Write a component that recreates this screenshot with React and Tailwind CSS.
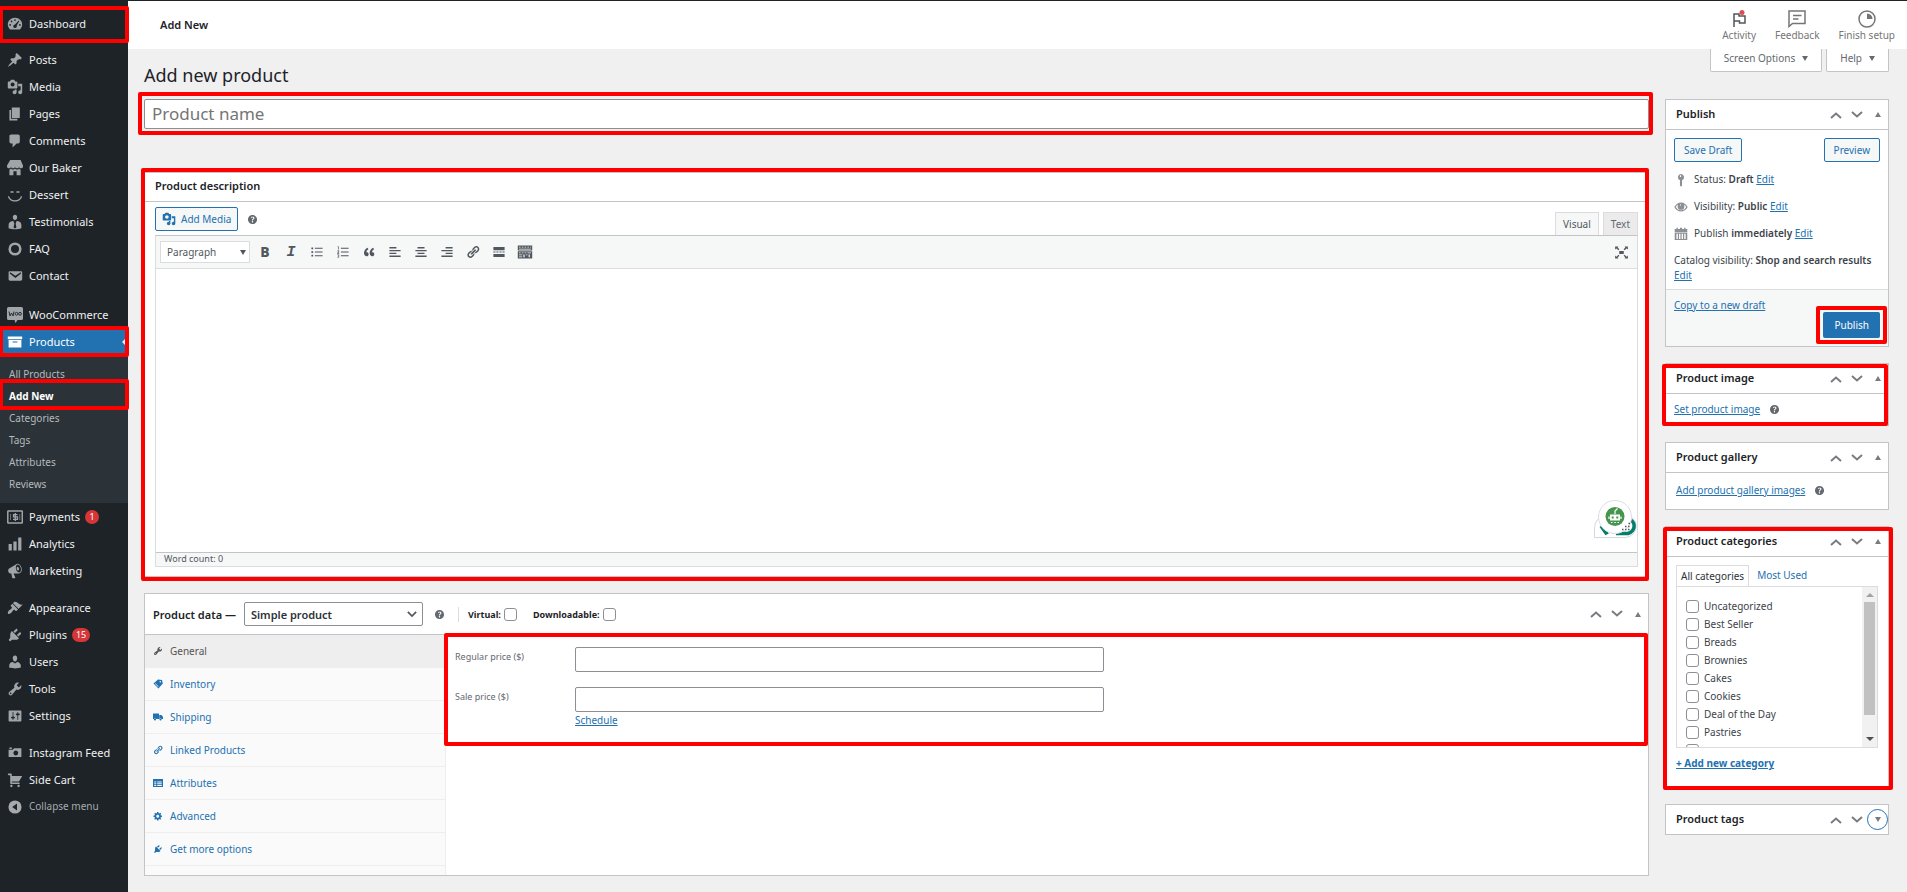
import React, { useState } from "react";

const icons = {
  dashboard:
    "M3.76 17h12.48A8.96 8.96 0 0 0 19 10.8C19 6 15 2.300 10 2.300S1 6 1 10.800A8.960 8.960 0 0 0 3.760 17zM10 4a1.100 1.100 0 1 1 0 2.200A1.100 1.100 0 0 1 10 4zM5.700 5.700a1.100 1.100 0 1 1 0 2.200 1.100 1.100 0 0 1 0-2.200zM14.700 5.700l.7.7-3.200 5.500c.5 1.700-.4 3.100-2.200 3.100-1.700 0-2.700-1.700-1.900-3.200.4-.7 1.100-1.100 1.900-1.100zM3.900 10a1.100 1.100 0 1 1 0 2.200 1.100 1.100 0 0 1 0-2.200zM16.100 10a1.100 1.100 0 1 1 0 2.200 1.100 1.100 0 0 1 0-2.200z",
  pin: "M10.44 3.02l1.82-1.82 6.36 6.35-1.83 1.82c-1.05-.68-2.48-.57-3.41.36l-.75.75c-.92.93-1.04 2.35-.35 3.41l-1.83 1.82-2.41-2.41-2.8 2.79c-.42.42-3.38 2.71-3.8 2.29s1.86-3.39 2.28-3.81l2.79-2.79L4.1 9.36l1.83-1.82c1.05.69 2.48.57 3.4-.36l.75-.75c.93-.92 1.05-2.35.36-3.41z",
  media:
    "M13 11V4c0-.55-.45-1-1-1h-1.67L9 1H5L3.67 3H2c-.55 0-1 .45-1 1v7c0 .55.45 1 1 1h10c.55 0 1-.45 1-1zM7 4.5c1.38 0 2.5 1.12 2.5 2.5S8.38 9.5 7 9.5 4.5 8.38 4.5 7 5.62 4.5 7 4.5zM14 6h5v10.5c0 1.38-1.12 2.5-2.5 2.5S14 17.88 14 16.5s1.12-2.5 2.5-2.5c.17 0 .34.02.5.05V9h-3V6zm-4 8.050V13h2v3.5c0 1.38-1.12 2.5-2.5 2.5S7 17.88 7 16.5 8.120 14 9.5 14c.17 0 .34.02.5.05z",
  page: "M6 15V2h10v13H6zm-1 1h8v2H3V5h2v11z",
  comment: "M5 2h9c1.1 0 2 .9 2 2v7c0 1.1-.9 2-2 2h-2l-5 5v-5H5c-1.1 0-2-.9-2-2V4c0-1.1.9-2 2-2z",
  store:
    "M1 10c.41.29.96.43 1.5.43.55 0 1.09-.14 1.5-.43.62-.46 1-1.17 1-2 0 .83.37 1.54 1 2 .41.29.96.43 1.5.43.55 0 1.09-.14 1.5-.43.62-.46 1-1.17 1-2 0 .83.37 1.54 1 2 .41.29.96.43 1.51.43.54 0 1.08-.14 1.49-.43.62-.46 1-1.17 1-2 0 .83.37 1.54 1 2 .41.29.96.43 1.5.43.55 0 1.09-.14 1.5-.43.63-.46 1-1.17 1-2V7l-3-7H4L0 7v1c0 .83.37 1.54 1 2zm2 8.99h5v-5h4v5h5v-7c-.37-.05-.72-.22-1-.43-.63-.45-1-.73-1-1.56 0 .83-.38 1.11-1 1.56-.41.3-.95.43-1.49.44-.55 0-1.1-.14-1.51-.44-.63-.45-1-.73-1-1.56 0 .83-.38 1.11-1 1.56-.41.3-.95.43-1.5.44-.54 0-1.09-.14-1.5-.44-.63-.45-1-.73-1-1.57 0 .84-.38 1.12-1 1.57-.29.21-.63.38-1 .44v6.99z",
  smiley:
    "M5 5.200h2.600c.6 0 .9.500.9 1s-.3 1-.9 1H5c-.6 0-.9-.5-.9-1s.3-1 .9-1zM12.400 5.200H15c.6 0 .9.500.9 1s-.3 1-.9 1h-2.600c-.6 0-.9-.5-.9-1s.3-1 .9-1zM1 11.500h1.600c1 3 3.900 5 7.400 5s6.400-2 7.400-5H19c-1 4-4.600 6.700-9 6.700s-8-2.700-9-6.700z",
  person:
    "M10 7.500C8 7.500 7.300 5.300 7.300 4c0-1.600 1-3 2.700-3s2.700 1.400 2.700 3c0 1.300-.7 3.500-2.700 3.500zM7 8.700l2 1-.6 1 .8 1.200-1 5 1.800 1.100 1.800-1.100-1-5 .8-1.200-.6-1 2-1c3 .3 5 2.300 5 5v4c-4.500 1.800-11.500 1.800-16 0v-4c0-2.700 2-4.700 5-5z",
  ring: "M10 1.800a8.200 8.200 0 1 1 0 16.400 8.200 8.200 0 0 1 0-16.400zm0 3.200a5 5 0 1 0 0 10 5 5 0 0 0 0-10z",
  email:
    "M3.87 4h13.25C18.37 4 19 4.590 19 5.790v8.420c0 1.190-.63 1.790-1.880 1.790H3.870c-1.250 0-1.880-.6-1.880-1.790V5.790c0-1.2.63-1.790 1.880-1.790zm6.620 8.600l6.740-5.530c.24-.2.43-.66.13-1.070-.29-.41-.82-.42-1.170-.17l-5.700 3.860L4.800 5.830c-.35-.25-.88-.24-1.170.17-.3.41-.11.87.13 1.070z",
  archive: "M19 3v3.500H1V3h18zM2 7.500h16V17H2V7.500zM13 10.500V9.300H7v1.200h6z",
  chart: "M18 18V2h-4v16h4zm-6 0V7H8v11h4zm-6 0v-8H2v8h4z",
  megaphone:
    "M18.15 5.94c.46 1.62.38 3.22-.02 4.48-.42 1.28-1.26 2.18-2.3 2.48-.16.06-.26.06-.4.06-.06.02-.12.02-.18.02-.06.02-.14.02-.22.02h-6.8l2.22 5.5c.02.14-.06.26-.14.34-.08.1-.24.16-.34.16H6.95c-.1 0-.26-.06-.34-.16-.08-.08-.16-.2-.14-.34l-1-5.5H4.25l-.02-.02c-.5.06-1.08-.18-1.54-.62s-.88-1.08-1.06-1.88c-.24-.8-.2-1.56-.02-2.2.18-.62.58-1.08 1.06-1.3l.02-.02 9-5.4c.1-.06.18-.1.24-.16.06-.04.14-.08.24-.12.16-.08.28-.12.5-.18 1.04-.3 2.24.1 3.22.98s1.84 2.24 2.26 3.86zm-2.58 5.98h-.02c.4-.1.74-.34 1.04-.7.58-.7.86-1.76.86-3.04 0-.64-.1-1.3-.28-1.98-.34-1.36-1.02-2.5-1.78-3.24s-1.68-1.1-2.46-.88c-.82.22-1.4.96-1.7 2-.32 1.04-.28 2.36.06 3.72.38 1.36 1 2.5 1.8 3.24.78.74 1.62 1.1 2.48.88zm-2.54-7.08c.22-.04.42-.02.62.04.38.16.76.48 1.02 1s.42 1.2.42 1.78c0 .3-.04.56-.12.8-.18.48-.44.84-.86.94-.34.1-.8-.06-1.14-.4s-.64-.86-.78-1.5c-.18-.62-.12-1.24.02-1.72s.48-.84.82-.94z",
  brush:
    "M14.48 11.06L7.41 3.99l1.5-1.5c.5-.56 2.3-.47 3.51.32 1.21.8 1.43 1.28 2.91 2.1 1.18.64 2.45 1.26 4.45.85zm-.71.71L6.7 4.7 4.93 6.47c-.39.39-.39 1.02 0 1.41l1.06 1.06c.39.39.39 1.03 0 1.42-.6.6-1.43 1.11-2.21 1.69-.35.26-.7.53-1.01.84C1.43 14.23.4 16.08 1.4 17.07c.99 1 2.84-.03 4.18-1.36.31-.31.58-.66.85-1.02.57-.78 1.08-1.61 1.69-2.21.39-.39 1.02-.39 1.41 0l1.06 1.06c.39.39 1.02.39 1.41 0z",
  plug: "M13.11 4.36L9.87 7.6 8 5.73l3.24-3.24c.35-.34 1.05-.2 1.56.32.52.51.66 1.21.31 1.55zm-8 1.77l.91-1.12 9.01 9.01-1.19.84c-.71.71-2.63 1.16-3.82 1.16H6.14L4.9 17.26c-.59.59-1.54.59-2.12 0-.59-.58-.59-1.53 0-2.12l1.24-1.24v-3.88c0-1.13.4-3.19 1.09-3.89zm7.26 3.97l3.24-3.24c.34-.35 1.04-.21 1.55.31.52.51.66 1.21.31 1.55l-3.24 3.25z",
  user: "M10 9.25c-2.27 0-2.73-3.44-2.73-3.44C7 4.02 7.82 2 9.97 2c2.16 0 2.98 2.02 2.71 3.81 0 0-.41 3.44-2.68 3.44zm0 2.57L12.72 10c2.39 0 4.52 2.33 4.52 4.53v2.49s-3.65 1.13-7.24 1.13c-3.65 0-7.24-1.13-7.24-1.13v-2.49c0-2.25 1.94-4.48 4.47-4.48z",
  wrench:
    "M16.68 9.77c-1.34 1.34-3.3 1.67-4.95.99l-5.41 6.52c-.99.99-2.59.99-3.58 0s-.99-2.59 0-3.57l6.52-5.42c-.68-1.65-.35-3.61.99-4.95 1.28-1.28 3.12-1.62 4.72-1.06l-2.89 2.89 2.82 2.82 2.86-2.87c.53 1.58.18 3.39-1.08 4.65zM3.81 16.21c.4.39 1.04.39 1.43 0 .4-.4.4-1.04 0-1.43-.39-.4-1.03-.4-1.43 0-.39.39-.39 1.03 0 1.43z",
  sliders:
    "M18 16V4c0-.55-.45-1-1-1H3c-.55 0-1 .45-1 1v12c0 .55.45 1 1 1h14c.55 0 1-.45 1-1zM8 11h1c.55 0 1 .45 1 1s-.45 1-1 1H8v1.5c0 .28-.22.5-.5.5s-.5-.22-.5-.5V13H6c-.55 0-1-.45-1-1s.45-1 1-1h1V5.5c0-.28.22-.5.5-.5s.5.22.5.5V11zm5-2h-1c-.55 0-1-.45-1-1s.45-1 1-1h1V5.5c0-.28.22-.5.5-.5s.5.22.5.5V7h1c.55 0 1 .45 1 1s-.45 1-1 1h-1v5.5c0 .28-.22.5-.5.5s-.5-.22-.5-.5V9z",
  camera: "M6 5V3H3v2h3zm12 10V4H9L7 6H2v9h16zm-7-8c1.66 0 3 1.34 3 3s-1.34 3-3 3-3-1.34-3-3 1.34-3 3-3z",
  cart: "M6 13h9c.55 0 1 .45 1 1s-.45 1-1 1H5c-.55 0-1-.45-1-1V4H2c-.55 0-1-.45-1-1s.45-1 1-1h3c.55 0 1 .45 1 1v2h13l-4 7H6v1zm-.5 3c.83 0 1.5.67 1.5 1.5S6.33 19 5.5 19 4 18.33 4 17.5 4.67 16 5.5 16zm9 0c.83 0 1.5.67 1.5 1.5s-.67 1.5-1.5 1.5-1.5-.67-1.5-1.5.67-1.5 1.5-1.5z",
  collapse: "M10 1.800a8.200 8.200 0 1 1 0 16.400 8.200 8.200 0 0 1 0-16.400zm2.500 3.700L6.500 10l6 4.500z",
  quote:
    "M9.49 13.22c0-.74-.2-1.38-.61-1.9-.62-.78-1.83-.88-2.53-.72-.29-1.65 1.11-3.75 2.92-4.65L7.88 4c-2.73 1.3-5.42 4.28-4.96 8.05C3.21 14.43 4.59 16 6.54 16c.85 0 1.56-.25 2.12-.75s.83-1.18.83-2.03zm8.05 0c0-.74-.2-1.38-.61-1.9-.63-.78-1.83-.88-2.53-.72-.29-1.65 1.11-3.75 2.92-4.65L15.93 4c-2.73 1.3-5.41 4.28-4.95 8.05.29 2.38 1.66 3.95 3.61 3.95.85 0 1.56-.25 2.12-.75s.83-1.18.83-2.03z",
  link: "M17.74 2.76c1.68 1.69 1.68 4.41 0 6.1l-1.53 1.52c-1.12 1.12-2.7 1.47-4.14 1.09l2.62-2.61.76-.77.76-.76c.84-.84.84-2.2 0-3.04-.84-.85-2.2-.85-3.04 0l-.77.76-3.38 3.38c-.37-1.44-.02-3.02 1.1-4.14l1.52-1.53c1.69-1.68 4.42-1.68 6.1 0zM8.59 13.43l5.34-5.34c.42-.42.42-1.1 0-1.52-.44-.43-1.13-.39-1.53 0l-5.33 5.34c-.42.42-.42 1.1 0 1.52.44.43 1.13.39 1.52 0zm-.76 2.29l4.14-4.15c.38 1.44.03 3.02-1.09 4.14l-1.52 1.53c-1.69 1.68-4.41 1.68-6.1 0-1.68-1.68-1.68-4.42 0-6.1l1.53-1.52c1.12-1.12 2.7-1.47 4.14-1.1l-4.14 4.15c-.85.84-.85 2.2 0 3.05.84.84 2.2.84 3.04 0z",
  listUl: "M2 3.500h2.500v2.500H2zM7 4h11v1.300H7zM2 8.800h2.500v2.500H2zM7 9.300h11v1.300H7zM2 14h2.500v2.500H2zM7 14.600h11v1.300H7z",
  listOl: "M2 2h2v4.500H3V3H2zM7 4h11v1.300H7zM1.800 8H4.500v2.500L3 11.500h1.500v1H1.800v-1.500L3.500 9.800V9H1.800zM7 9.300h11v1.300H7zM1.800 13.500h2.700V18H1.800v-1h1.700v-.8H2.200v-1h1.300v-.8H1.800zM7 14.600h11v1.300H7z",
  alignLeft: "M2 3h10v2H2zM2 7h16v2H2zM2 11h10v2H2zM2 15h16v2H2z",
  alignCenter: "M5 3h10v2H5zM2 7h16v2H2zM5 11h10v2H5zM2 15h16v2H2z",
  alignRight: "M8 3h10v2H8zM2 7h16v2H2zM8 11h10v2H8zM2 15h16v2H2z",
  more: "M2 3h16v4.500H2zM2 9.300h3v1.500H2zM6.300 9.300h3v1.500h-3zM10.700 9.300h3v1.500h-3zM15 9.300h3v1.500h-3zM2 12.700h16v4.500H2z",
  kitchen:
    "M1 2h18v6H1zM2.500 3.500v1h2v-1zM6 3.500v1h2v-1zM9.500 3.500v1h2v-1zM13 3.500v1h2v-1zM16.500 3.500v1h1v-1zM2.500 6v1h15V6zM1 9h18v9H1zM2.500 10.500v1h2v-1zM6 10.500v1h2v-1zM9.500 10.500v1h2v-1zM13 10.500v1h4.500v-1zM2.500 13v1h4v-1zM8 13v3.500h1.500V13zM11 13v1h2v-1zM14.500 13v3.500H16V13zM2.500 15.500v1h4v-1z",
  expand:
    "M7 8h6v4H7zM1.500 2h4.500L4.800 3.300 7.200 5.700 5.900 7 3.300 4.500 1.500 6zM18.500 2H14l1.200 1.300-2.400 2.400L14.100 7l2.600-2.500L18.500 6zM1.500 18h4.500l-1.200-1.300 2.400-2.400L5.900 13l-2.600 2.500L1.500 14zM18.500 18H14l1.200-1.300-2.400-2.400 1.300-1.300 2.600 2.500 1.800-1.500z",
  help: "M17 10c0-3.870-3.140-7-7-7-3.870 0-7 3.130-7 7s3.130 7 7 7c3.860 0 7-3.130 7-7zm-6.300 1.480H9.140v-.43c0-.38.08-.7.24-.98s.46-.57.88-.89c.41-.29.68-.53.81-.71.14-.18.2-.39.2-.62 0-.25-.09-.44-.28-.58-.19-.13-.45-.19-.79-.19-.58 0-1.250.19-2 .57l-.64-1.280c.87-.49 1.800-.74 2.770-.74.81 0 1.450.2 1.920.58.48.39.71.91.71 1.550 0 .43-.09.8-.29 1.110-.19.32-.57.67-1.110 1.060-.38.28-.61.49-.71.63-.1.15-.15.34-.15.570v.35zm-1.470 2.740c-.18-.17-.27-.42-.27-.73 0-.33.08-.58.26-.75s.43-.25.77-.25c.32 0 .57.09.75.26s.27.42.27.74c0 .3-.09.55-.27.72-.18.180-.43.270-.75.270-.33 0-.58-.09-.76-.26z",
  key: "M10 1.500a4.500 4.500 0 0 1 1.500 8.700V18L10 19.500 8.500 18v-7.800A4.500 4.500 0 0 1 10 1.500zM8.500 3.300v2.500h1.600V3.300z",
  eye: "M10 3.500c4 0 7.500 2.500 9.500 6.500-2 4-5.500 6.500-9.500 6.500S2.500 14 .5 10C2.500 6 6 3.500 10 3.500zM2.500 10c1.500 2.800 4.300 4.700 7.500 4.700s6-1.900 7.500-4.700c-.8-1.500-2-2.700-3.400-3.500.5.900.7 1.800.7 2.800a4.800 4.800 0 0 1-9.600 0c0-1 .2-1.900.7-2.800C4.500 7.300 3.300 8.500 2.500 10zM10 6.200a1.600 1.600 0 0 0-1.600 1.600h1.600z",
  calendar:
    "M1 3h2.500V1h2v2h3V1h3v2h3V1h2v2H19v4H1zM1 8h18v10.500H1zM3.500 9.500v7.500h2V9.500zM7.200 9.500v7.500h2V9.500zM10.900 9.500v7.500h2V9.500zM14.600 9.500v7.500h2V9.500z",
  tags: "M10 1l8 1 1.500 7-8.500 10L1 9zM14.500 4a1.400 1.400 0 1 0 .1 0zM3.800 9.500l6.500 6.500.8-.8-6.500-6.500z",
  truck: "M0 3h12v11H0zM12.500 6H17l3 4v4h-7.500zM4 13a2 2 0 1 1 0 4.200A2 2 0 0 1 4 13zM15 13a2 2 0 1 1 0 4.200 2 2 0 0 1 0-4.200z",
  table: "M0 2h20v16H0zM2.500 7v2h4V7zM8.500 7v2h9V7zM2.500 10.500v2h4v-2zM8.500 10.500v2h9v-2zM2.500 14v2h4v-2zM8.500 14v2h9v-2z",
  gear: "M18 12h-2.180c-.17.7-.44 1.35-.81 1.93l1.54 1.54-2.1 2.1-1.54-1.54c-.58.36-1.23.63-1.91.79V19H8v-2.180c-.68-.16-1.33-.43-1.910-.79l-1.540 1.54-2.120-2.120 1.540-1.540c-.36-.58-.63-1.230-.79-1.910H1V9.030h2.170c.16-.7.440-1.350.8-1.940L2.430 5.550l2.100-2.100 1.540 1.540c.58-.37 1.240-.64 1.930-.81V2h3v2.180c.68.16 1.330.43 1.910.79l1.540-1.540 2.120 2.120-1.540 1.540c.36.590.64 1.240.8 1.940H18V12zm-8.500 1.500c1.660 0 3-1.340 3-3s-1.340-3-3-3-3 1.340-3 3 1.340 3 3 3z",
};

const menu = [
  { gap: "mb-[9px]", items: [{ label: "Dashboard", icon: "dashboard", marked: true }] },
  {
    gap: "mb-3",
    items: [
      { label: "Posts", icon: "pin" },
      { label: "Media", icon: "media" },
      { label: "Pages", icon: "page" },
      { label: "Comments", icon: "comment" },
      { label: "Our Baker", icon: "store" },
      { label: "Dessert", icon: "smiley" },
      { label: "Testimonials", icon: "person" },
      { label: "FAQ", icon: "ring" },
      { label: "Contact", icon: "email" },
    ],
  },
  {
    gap: "mb-[10px]",
    items: [
      { label: "WooCommerce", icon: "woo" },
      { label: "Products", icon: "archive", active: true },
      { label: "Payments", icon: "payments", count: 1 },
      { label: "Analytics", icon: "chart" },
      { label: "Marketing", icon: "megaphone" },
    ],
  },
  {
    gap: "mb-[10px]",
    items: [
      { label: "Appearance", icon: "brush" },
      { label: "Plugins", icon: "plug", count: 15 },
      { label: "Users", icon: "user" },
      { label: "Tools", icon: "wrench" },
      { label: "Settings", icon: "sliders" },
    ],
  },
  {
    gap: "",
    items: [
      { label: "Instagram Feed", icon: "camera" },
      { label: "Side Cart", icon: "cart" },
    ],
  },
];

const submenu = ["All Products", "Add New", "Categories", "Tags", "Attributes", "Reviews"];

const tools = ["listUl", "listOl", "quote", "alignLeft", "alignCenter", "alignRight", "link", "more", "kitchen"];

const dataTabs = [
  { label: "General", icon: "wrench" },
  { label: "Inventory", icon: "tags" },
  { label: "Shipping", icon: "truck" },
  { label: "Linked Products", icon: "link" },
  { label: "Attributes", icon: "table" },
  { label: "Advanced", icon: "gear" },
  { label: "Get more options", icon: "plug" },
];

const categories = [
  "Uncategorized",
  "Best Seller",
  "Breads",
  "Brownies",
  "Cakes",
  "Cookies",
  "Deal of the Day",
  "Pastries",
];

const Icon = ({ name, className = "size-4" }) => {
  if (name === "woo") {
    return (
      <svg viewBox="0 0 16 16" className={className} aria-hidden="true">
        <path fill="currentColor" d="M1.500 0h13A1.500 1.500 0 0 1 16 1.500v10a1.500 1.500 0 0 1-1.500 1.500H10.500L8.500 16l-1-3h-6A1.500 1.500 0 0 1 0 11.500v-10A1.500 1.500 0 0 1 1.500 0z" />
        <path fill="none" stroke="#1d2327" strokeWidth=".9" d="M2 4.500l1 4.500 1.500-3L6 9l1-4.500" />
        <circle cx="9.500" cy="6.800" r="1.400" fill="none" stroke="#1d2327" strokeWidth=".9" />
        <circle cx="13" cy="6.800" r="1.400" fill="none" stroke="#1d2327" strokeWidth=".9" />
      </svg>
    );
  }
  if (name === "payments") {
    return (
      <svg viewBox="0 0 16 16" className={className} fill="none" stroke="currentColor" aria-hidden="true">
        <rect x=".8" y="2" width="14.500" height="12" rx=".5" strokeWidth="1.500" />
        <path d="M10.500 5.700h-4v2.200h4v2.400h-4.500M8.300 4v8" strokeWidth="1.300" />
        <path d="M3.500 5v6M12.800 5v6" strokeWidth=".6" />
      </svg>
    );
  }
  return (
    <svg viewBox="0 0 20 20" className={className} fill="currentColor" fillRule="evenodd" aria-hidden="true">
      <path d={icons[name]} />
    </svg>
  );
};

// red frame drawn over the part that the guide talks about
const Mark = ({ className }) => (
  <span className={`pointer-events-none absolute z-10 rounded-xs border-4 border-[#ff0000] ${className}`}></span>
);

const Help = () => (
  <span className="text-[#646970]" title="Help">
    <Icon name="help" className="size-[13px]" />
  </span>
);

const Handles = ({ closed }) => (
  <div className="flex items-center text-[#787c82]">
    <button aria-label="Move up" className="flex w-[21px] justify-center">
      <svg viewBox="0 0 12 8" className="w-3" fill="none" stroke="currentColor" strokeWidth="2">
        <path d="M1 7l5-4.500L11 7" />
      </svg>
    </button>
    <button aria-label="Move down" className="flex w-[21px] justify-center">
      <svg viewBox="0 0 12 8" className="w-3" fill="none" stroke="currentColor" strokeWidth="2">
        <path d="M1 1l5 4.500L11 1" />
      </svg>
    </button>
    <button
      aria-label="Toggle panel"
      className={`flex size-[21px] items-center justify-center ${closed ? "rounded-full border border-[#2271b1]" : ""}`}
    >
      <svg viewBox="0 0 6 5" className="w-[6px]" fill="currentColor">
        <path d={closed ? "M0 0h6L3 5z" : "M0 5h6L3 0z"} />
      </svg>
    </button>
  </div>
);

const Panel = ({ title, closed, mark, children }) => (
  <section className="relative border border-[#c3c4c7] bg-white">
    <div className={`flex items-center justify-between pl-[10px] ${closed ? "h-[29px]" : "h-[30px] border-b border-[#c3c4c7]"}`}>
      <h2 className="pb-[2px] text-[11px] font-semibold text-[#1d2327]">{title}</h2>
      <Handles closed={closed} />
    </div>
    {children}
    {mark && <Mark className={mark} />}
  </section>
);

const MenuItem = ({ item }) => (
  <li>
    <a
      href="#"
      className={`relative flex h-[27px] items-center gap-[6px] pl-[7px] text-[11px] ${
        item.active ? "bg-[#2271b1] text-white" : "text-[#f0f0f1]"
      }`}
    >
      <span className={item.active ? "text-white" : "text-[#a0a5aa]"}>
        <Icon name={item.icon} />
      </span>
      {item.label}
      {item.count && (
        <span className="-ml-px flex h-[14px] min-w-[14px] items-center justify-center rounded-full bg-[#d63638] px-1 text-[9px] text-white">
          {item.count}
        </span>
      )}
      {item.active && (
        <span className="absolute right-0 border-y-[6px] border-r-[6px] border-y-transparent border-r-[#f0f0f1]"></span>
      )}
      {item.active && <Mark className="inset-x-[-1px] -inset-y-[2px]" />}
      {item.marked && <Mark className="inset-x-[-1px] -top-1 -bottom-[6px]" />}
    </a>
    {item.active && (
      <ul className="bg-[#2c3338] py-2">
        {submenu.map((name) => (
          <li key={name}>
            <a
              href="#"
              className={`relative flex h-[22px] items-center pl-[9px] text-[10px] ${
                name === "Add New" ? "font-bold text-white" : "text-[#b4b9be]"
              }`}
            >
              {name}
              {name === "Add New" && <Mark className="inset-x-[-1px] -top-[6px] -bottom-[3px]" />}
            </a>
          </li>
        ))}
      </ul>
    )}
  </li>
);

const Sidebar = () => (
  <nav className="w-32 shrink-0 bg-[#1d2327] pt-[10px]">
    {menu.map((group, index) => (
      <ul key={index} className={group.gap}>
        {group.items.map((item) => (
          <MenuItem key={item.label} item={item} />
        ))}
      </ul>
    ))}
    <button className="flex h-[27px] items-center gap-[6px] pl-[7px] text-[10px] text-[#a7aaad]">
      <Icon name="collapse" />
      Collapse menu
    </button>
  </nav>
);

const Header = () => (
  <header className="flex h-12 items-center justify-between bg-white pr-3 pl-8">
    <h1 className="pb-[2px] text-[11px] font-semibold text-[#1d2327]">Add New</h1>
    <div className="flex gap-[19px] text-[10px] leading-3 text-[#757575]">
      <button className="flex flex-col items-center gap-px">
        <svg viewBox="0 0 18 18" className="size-[18px]" fill="none" stroke="#50575e" strokeWidth="1.500">
          <path d="M4 17V4h5v2h6v7H9.500v-2H4" />
          <circle cx="12" cy="2.500" r="2.500" fill="#e04b4f" stroke="none" />
        </svg>
        Activity
      </button>
      <button className="flex flex-col items-center gap-px">
        <svg viewBox="0 0 18 18" className="size-[18px]" fill="none" stroke="currentColor" strokeWidth="1.500">
          <path d="M1 1h16v12.500H4.500L1 16.500zM5 5.500h8.500M5 9h5.500" />
        </svg>
        Feedback
      </button>
      <button className="flex flex-col items-center gap-px">
        <svg viewBox="0 0 18 18" className="size-[18px]" fill="none" stroke="currentColor" strokeWidth="1.500">
          <circle cx="9" cy="9" r="8" />
          <path d="M9 3.500V9h5.500A5.500 5.500 0 0 0 9 3.500z" fill="currentColor" stroke="none" />
        </svg>
        Finish setup
      </button>
    </div>
  </header>
);

const Editor = () => (
  <section className="relative border border-[#c3c4c7] bg-white">
    <h2 className="flex h-[29px] items-center border-b border-[#c3c4c7] pb-[3px] pl-[10px] text-[11px] font-semibold text-[#1d2327]">
      Product description
    </h2>
    <div className="px-[10px] pt-[5px] pb-[9px]">
      <div className="flex items-end justify-between">
        <div className="mb-1 flex items-center gap-2">
          <button className="flex h-6 items-center gap-[5px] rounded-xs border border-[#2271b1] bg-[#f6f7f7] px-[6px] text-[10px] text-[#2271b1]">
            <Icon name="media" className="size-[14px]" />
            Add Media
          </button>
          <Help />
        </div>
        <div className="flex gap-1 text-[10px] text-[#50575e]">
          <button className="h-[23px] border border-b-0 border-[#dcdcde] bg-[#f6f7f7] px-[7px]">Visual</button>
          <button className="h-[23px] border border-b-0 border-[#dcdcde] bg-[#ebebeb] px-[7px] text-[#646970]">Text</button>
        </div>
      </div>
      <div className="border border-[#dcdcde] border-t-[#c3c4c7]">
        <div className="flex h-[33px] items-center border-b border-[#dcdcde] bg-[#f6f7f7] px-1 text-[#50575e]">
          <div className="relative mr-[2px]">
            <select
              aria-label="Text style"
              className="h-[22px] w-[90px] appearance-none border border-[#dcdcde] bg-white pl-[6px] text-[10px]"
            >
              <option>Paragraph</option>
            </select>
            <span className="absolute top-[9px] right-1 border-x-[3px] border-t-[5px] border-x-transparent border-t-[#50575e]"></span>
          </div>
          <button className="w-[26px] text-[14px] leading-none font-extrabold" aria-label="Bold">B</button>
          <button
            className="w-[26px] font-['Liberation_Mono',monospace] text-[15px] leading-none font-bold italic"
            aria-label="Italic"
          >
            I
          </button>
          {tools.map((name) => (
            <button key={name} aria-label={name} className="flex w-[26px] justify-center">
              <Icon name={name} className={name === "kitchen" ? "size-4" : "size-[14px]"} />
            </button>
          ))}
          <button aria-label="Distraction free" className="mr-1 ml-auto">
            <Icon name="expand" className="size-[15px]" />
          </button>
        </div>
        <textarea aria-label="Product description" className="block h-[283px] w-full resize-none outline-none"></textarea>
        <div className="h-[14px] border-t border-[#c3c4c7] bg-[#f6f7f7] pl-2 text-[9px] leading-3 text-[#50575e]">
          Word count: 0
        </div>
      </div>
    </div>
    {/* grammar and chat helpers floating over the text area */}
    <div className="absolute right-[10px] bottom-[38px] h-[38px] w-[44px]">
      <svg viewBox="0 0 44 38" fill="none">
        <path d="M.5 37.500V28A13 13 0 0 1 13 15h18a11 11 0 1 1 0 22.500z" fill="#fff" stroke="#d5d7e0" />
        <path d="M7 26l5 7 2-1M37 20c5 4 4 11-3 13.500H22" stroke="#00806c" strokeWidth="3.500" />
        <circle cx="21" cy="17" r="16.500" fill="#fff" stroke="#dcdde3" />
        <circle cx="21" cy="16.500" r="9.500" fill="#46954f" />
        <path d="M16 14.500h10v6H16z" fill="#fff" />
        <path d="M21 14v-3l2.500-2.500M15 16.500v2.500M27 16.500v2.500M17 22.500h1.500M20.300 22.500h1.500M23.500 22.500H25" stroke="#fff" strokeWidth="1.200" />
        <path d="M17.700 16.500h2v2h-2zM22.300 16.500h2v2h-2z" fill="#46954f" />
        <path d="M28 29.500h8M31 26.500h5M34.500 23.500H36" stroke="#50575e" strokeDasharray="1.500 1.500" strokeWidth="1.500" />
      </svg>
    </div>
    <Mark className="-top-[5px] -right-px -bottom-[5px] -left-1" />
  </section>
);

const ProductData = () => {
  const [tab, setTab] = useState("General");

  return (
    <section className="border border-[#c3c4c7] bg-white">
      <div className="flex h-[41px] items-center border-b border-[#c3c4c7] pl-2 text-[#1d2327]">
        <label htmlFor="type" className="text-[11px] font-semibold">
          Product data —
        </label>
        <div className="relative ml-2">
          <select
            id="type"
            className="h-6 w-[179px] appearance-none rounded-xs border border-[#8c8f94] bg-white pl-[6px] text-[11px] font-semibold text-[#2c3338]"
          >
            <option>Simple product</option>
          </select>
          <svg viewBox="0 0 12 8" className="absolute top-[9px] right-[6px] w-[10px]" fill="none" stroke="#50575e" strokeWidth="2">
            <path d="M1 1l5 5 5-5" />
          </svg>
        </div>
        <div className="ml-[10px]">
          <Help />
        </div>
        <div className="ml-3 flex items-center border-l border-[#dcdcde] pl-[9px] text-[9px] font-bold">
          <label htmlFor="virtual">Virtual:</label>
          <input id="virtual" type="checkbox" className="ml-[3px] size-[13px] appearance-none rounded-[3px] border border-[#8c8f94]" />
          <label htmlFor="downloadable" className="ml-4">
            Downloadable:
          </label>
          <input id="downloadable" type="checkbox" className="ml-[3px] size-[13px] appearance-none rounded-[3px] border border-[#8c8f94]" />
        </div>
        <div className="ml-auto">
          <Handles />
        </div>
      </div>

      <div className="flex">
        <ul className="w-[301px] shrink-0 border-r border-[#eeeeee] bg-[#fafafa] pb-[9px]">
          {dataTabs.map((item) => (
            <li key={item.label}>
              <button
                onClick={() => setTab(item.label)}
                className={`flex h-[33px] w-full items-center gap-[7px] border-b border-[#eeeeee] pl-2 text-[10px] ${
                  tab === item.label ? "bg-[#eeeeee] text-[#555555]" : "text-[#2271b1]"
                }`}
              >
                <Icon name={item.icon} className="size-[10px]" />
                {item.label}
              </button>
            </li>
          ))}
        </ul>
        <div className="relative h-[108px] flex-1 border-b border-[#eeeeee] pt-3 pl-[9px] text-[9px] text-[#646970]">
          <div className="flex">
            <label htmlFor="regular" className="w-[120px] shrink-0 pt-[2px]">
              Regular price ($)
            </label>
            <input id="regular" className="h-[25px] w-1/2 max-w-[529px] rounded-xs border border-[#8c8f94] px-2 text-[#2c3338]" />
          </div>
          <div className="mt-[15px] flex">
            <label htmlFor="sale" className="w-[120px] shrink-0 pt-[2px]">
              Sale price ($)
            </label>
            <div className="w-1/2 max-w-[529px]">
              <input id="sale" className="block h-[25px] w-full rounded-xs border border-[#8c8f94] px-2 text-[#2c3338]" />
              <a href="#" className="text-[10px] leading-[17px] text-[#2271b1] underline">
                Schedule
              </a>
            </div>
          </div>
          <Mark className="-top-[2px] right-0 -bottom-[4px] -left-[2px]" />
        </div>
      </div>
    </section>
  );
};

const Publish = () => (
  <Panel title="Publish">
    <div className="px-2 pt-2 pb-[6px] text-[10px] text-[#3c434a]">
      <div className="flex justify-between text-[#2271b1]">
        <button className="h-6 rounded-xs border border-[#2271b1] bg-[#f6f7f7] px-[9px]">Save Draft</button>
        <button className="h-6 rounded-xs border border-[#2271b1] bg-[#f6f7f7] px-[9px]">Preview</button>
      </div>
      <ul className="mt-1">
        <li className="flex h-[27px] items-center">
          <Icon name="key" className="mr-[6px] size-[14px] text-[#8c8f94]" />
          <span>
            Status: <b className="font-semibold">Draft</b> <a href="#" className="text-[#2271b1] underline">Edit</a>
          </span>
        </li>
        <li className="flex h-[27px] items-center">
          <Icon name="eye" className="mr-[6px] size-[14px] text-[#8c8f94]" />
          <span>
            Visibility: <b className="font-semibold">Public</b> <a href="#" className="text-[#2271b1] underline">Edit</a>
          </span>
        </li>
        <li className="flex h-[27px] items-center">
          <Icon name="calendar" className="mr-[6px] size-[14px] text-[#8c8f94]" />
          <span>
            Publish <b className="font-semibold">immediately</b> <a href="#" className="text-[#2271b1] underline">Edit</a>
          </span>
        </li>
      </ul>
      <p className="mt-[6px] leading-[15px]">
        Catalog visibility: <b className="font-semibold">Shop and search results</b>{" "}
        <a href="#" className="text-[#2271b1] underline">Edit</a>
      </p>
    </div>
    <div className="flex flex-col border-t border-[#dcdcde] bg-[#f6f7f7] px-2 pt-2 pb-2 text-[10px]">
      <a href="#" className="leading-[14px] text-[#2271b1] underline">
        Copy to a new draft
      </a>
      <div className="relative self-end">
        <button className="block h-[26px] rounded-xs bg-[#2271b1] px-[11px] text-white">Publish</button>
        <Mark className="-inset-x-[7px] -inset-y-[6px]" />
      </div>
    </div>
  </Panel>
);

const Categories = () => (
  <Panel title="Product categories" mark="top-0 -right-[5px] -bottom-[3px] -left-[3px]">
    <div className="px-[10px] pt-2 pb-4 text-[10px]">
      <div className="flex">
        <button className="h-[21px] border border-b-0 border-[#dcdcde] px-1 text-[#2c3338]">All categories</button>
        <button className="h-[21px] px-2 text-[#2271b1]">Most Used</button>
      </div>
      <div className="flex h-[162px] overflow-hidden border border-[#dcdcde]">
        <ul className="flex-1 pt-[10px] pl-[9px] text-[#3c434a]">
          {categories.map((name) => (
            <li key={name}>
              <label className="flex h-[18px] items-center gap-[5px]">
                <input type="checkbox" className="size-[13px] appearance-none rounded-[3px] border border-[#8c8f94]" />
                {name}
              </label>
            </li>
          ))}
          <li className="flex h-[18px] items-center">
            <input
              type="checkbox"
              aria-label="Next category"
              className="size-[13px] appearance-none rounded-[3px] border border-[#8c8f94]"
            />
          </li>
        </ul>
        <div className="flex w-[15px] flex-col items-center bg-[#f1f1f1] py-[6px]">
          <span className="border-x-[4px] border-b-[4px] border-x-transparent border-b-[#a3a3a3]"></span>
          <span className="mt-[5px] h-[113px] w-[11px] bg-[#c1c1c1]"></span>
          <span className="mt-auto border-x-[4px] border-t-[4px] border-x-transparent border-t-[#505050]"></span>
        </div>
      </div>
      <a href="#" className="mt-2 inline-block font-bold text-[#2271b1] underline">
        + Add new category
      </a>
    </div>
  </Panel>
);

const App = () => {
  return (
    <div className="flex min-h-screen bg-[#f0f0f1] font-['Noto_Sans','Open_Sans',sans-serif] leading-[15px]">
      <Sidebar />
      <div className="min-w-0 flex-1 border-t border-[#1d2327]">
        <Header />
        <main className="relative pr-[18px] pl-4">
          <div className="absolute top-0 right-[18px] flex gap-1 text-[10px] text-[#646970]">
            <button className="flex h-[23px] items-center gap-[7px] rounded-b-xs border border-t-0 border-[#c3c4c7] bg-white px-[13px] pb-[3px]">
              Screen Options
              <span className="border-x-[3px] border-t-[5px] border-x-transparent border-t-current"></span>
            </button>
            <button className="flex h-[23px] items-center gap-[7px] rounded-b-xs border border-t-0 border-[#c3c4c7] bg-white px-[13px] pb-[3px]">
              Help
              <span className="border-x-[3px] border-t-[5px] border-x-transparent border-t-current"></span>
            </button>
          </div>
          <h1 className="pt-4 text-[18px] leading-5 text-[#1d2327]">Add new product</h1>

          <div className="mt-[14px] flex items-start gap-4">
            <div className="min-w-0 flex-1">
              <div className="relative">
                <input
                  aria-label="Product name"
                  placeholder="Product name"
                  className="block h-[30px] w-full rounded-xs border border-[#8c8f94] bg-white px-[7px] pb-[2px] text-[17px] placeholder:text-[#757575]"
                />
                <Mark className="-top-[7px] -right-1 -bottom-[6px] -left-[6px]" />
              </div>
              <div className="mt-[43px] flex flex-col gap-4">
                <Editor />
                <ProductData />
                <div className="border-t border-[#c3c4c7]"></div>
              </div>
            </div>

            <aside className="flex w-[224px] shrink-0 flex-col gap-4">
              <Publish />
              <Panel title="Product image" mark="top-0 right-0 -bottom-px -left-1">
                <div className="flex items-center gap-2 px-2 pt-2 pb-2 text-[10px]">
                  <a href="#" className="text-[#2271b1] underline">Set product image</a>
                  <Help />
                </div>
              </Panel>
              <Panel title="Product gallery">
                <div className="flex items-center gap-2 px-[10px] pt-[10px] pb-[11px] text-[10px]">
                  <a href="#" className="text-[#2271b1] underline">Add product gallery images</a>
                  <Help />
                </div>
              </Panel>
              <Categories />
              <Panel title="Product tags" closed />
            </aside>
          </div>
        </main>
      </div>
    </div>
  );
};

export default App;
